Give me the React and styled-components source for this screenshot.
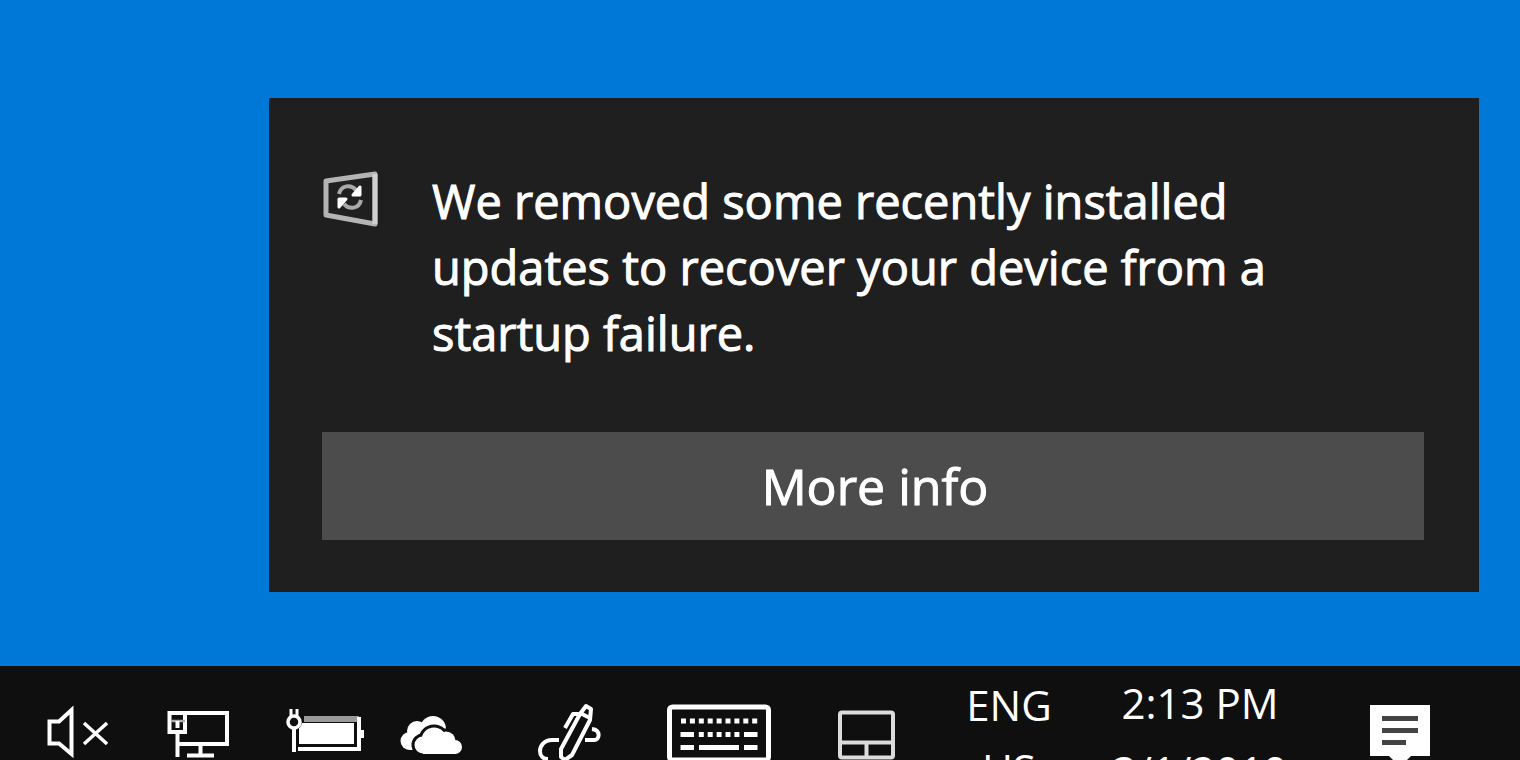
import React from "react";
import styled, { createGlobalStyle } from "styled-components";

const GlobalStyle = createGlobalStyle`
  * { box-sizing: border-box; }
  body { margin: 0; background: #0078d8; }
`;

const Screen = styled.div`
  display: flex;
  flex-direction: column;
  height: 100vh;
  overflow: hidden;
  background: #0078d8;
  color: #fff;
  font-family: "Open Sans", "Noto Sans", sans-serif;
`;

const Desktop = styled.main`
  flex: none;
  padding: 98px 41px 74px 269px;
`;

const Toast = styled.section`
  display: flex;
  flex-direction: column;
  gap: 66px;
  padding: 70px 55px 52px 53px;
  background: #1f1f1f;
  -webkit-text-stroke: 1px #fff;
`;

const Message = styled.div`
  display: flex;
  gap: 52px;
`;

const ToastIcon = styled.svg`
  flex: none;
  width: 58px;
  height: 58px;
  margin-top: 2px;
`;

const MessageText = styled.p`
  margin: 0;
  max-width: 860px;
  font-size: 47px;
  line-height: 66px;
`;

const ToastButton = styled.button`
  height: 108px;
  border: 0;
  padding: 0 0 0 4px;
  background: #4c4c4c;
  color: inherit;
  font-family: inherit;
  font-size: 50px;
`;

const Taskbar = styled.footer`
  flex: none;
  display: grid;
  grid-template-columns: 122fr 120fr 133fr 82fr 191fr 110fr 185fr 100fr 282fr 118fr;
  padding: 0 61px 0 16px;
  background: #0f0f0f;
`;

const TrayButton = styled.button`
  display: flex;
  justify-content: center;
  align-items: flex-start;
  border: 0;
  padding: 37px 0 0;
  background: none;
  color: inherit;
  font-family: inherit;
`;

const TrayText = styled(TrayButton)`
  padding-top: ${(p) => p.$top}px;
  font-size: 42px;
  line-height: ${(p) => p.$line}px;
  white-space: nowrap;
`;

const Glyph = styled.svg`
  flex: none;
  height: 64px;
  fill: none;
  stroke: #fff;
  stroke-width: 4;
`;

function TrayIcon({ label, width, children }) {
  return (
    <TrayButton aria-label={label}>
      <Glyph width={width} viewBox={`0 0 ${width} 64`}>{children}</Glyph>
    </TrayButton>
  );
}

const frontCloud = (
  <>
    <circle cx="23" cy="42" r="8.5" />
    <circle cx="34" cy="37" r="12.5" />
    <circle cx="46" cy="38" r="9.5" />
    <circle cx="55" cy="44" r="7" />
    <path d="M23 34H50L56 40V51H23Z" />
  </>
);

export default function App() {
  return (
    <Screen>
      <GlobalStyle />
      <Desktop>
        <Toast>
          <Message>
            <ToastIcon viewBox="0 0 58 58" fill="none" stroke="#b4b4b4" strokeWidth="5" strokeLinejoin="round">
              <path d="M4 11L53 4V54L4 45Z" />
              <path d="M53 4V54" stroke="#d0d0d0" />
              <path d="M17 24C19 15 29 14 34 20M39 30C37 39 27 40 22 34" stroke="#a8a8a8" strokeWidth="4" />
              <path d="M38 17V25H31ZM17 37V29H24Z" fill="#fff" stroke="#fff" strokeWidth="3" />
            </ToastIcon>
            <MessageText>
              We removed some recently installed updates to recover your device from a startup failure.
            </MessageText>
          </Message>
          <ToastButton>More info</ToastButton>
        </Toast>
      </Desktop>
      <Taskbar>
        <TrayIcon label="Volume muted" width={62}>
          <path d="M3.5 18.5H13L25.5 7V51L13 40.5H3.5Z" />
          <path d="M38 20L61 41M61 20L38 41" strokeWidth="3.5" />
        </TrayIcon>
        <TrayIcon label="Network" width={62}>
          <path d="M18 10H60V41H11" />
          <path d="M2.5 10H18V29H2.5ZM10.5 29V54" />
          <path d="M33.5 41V52M20 52.5H47" />
          <path d="M4 18H18" stroke="#aaa" strokeWidth="2.5" />
          <path d="M10.5 18V25" />
        </TrayIcon>
        <TrayIcon label="Battery charging" width={78}>
          <path d="M18 16H73" stroke="#999" strokeWidth="6" />
          <path d="M73 14V46H12" />
          <path d="M13 20H68V41H13Z" fill="#fff" stroke="none" />
          <path d="M75 27h3v8h-3Z" fill="#fff" stroke="none" />
          <circle cx="8" cy="19" r="8" fill="#0f0f0f" stroke="none" />
          <circle cx="8" cy="19" r="6" strokeWidth="3.5" />
          <path d="M5 6V14M11 6V14" strokeWidth="3" />
          <path d="M8 26V49" />
        </TrayIcon>
        <TrayIcon label="OneDrive" width={64}>
          <g fill="#fff" stroke="none">
            <circle cx="9.500" cy="38" r="9" />
            <circle cx="17" cy="28" r="10" />
            <circle cx="33" cy="26" r="13" />
            <path d="M10 32H24V47H10Z" />
          </g>
          <g fill="#0f0f0f" stroke="#0f0f0f" strokeWidth="6">{frontCloud}</g>
          <g fill="#fff" stroke="none">{frontCloud}</g>
        </TrayIcon>
        <TrayIcon label="Windows Ink Workspace" width={64}>
          <g strokeWidth="4" strokeLinejoin="round">
            <path d="M24 46L43 11L49 3L54 6L53 17L35 52L28 57L24 54Z" />
            <path d="M43 10L53 15" />
            <path d="M28 25L36 11H43" />
            <path d="M22 37H15C7 37 3 43 3 48C3 53 6 56 11 56" />
            <path d="M55 26C64 27 63 37 57 37H48" />
          </g>
        </TrayIcon>
        <TrayIcon label="Touch keyboard" width={104}>
          <rect x="2.5" y="4" width="99" height="53" rx="3" strokeWidth="5" />
          <g strokeWidth="5">
            <path d="M14 18H92" strokeDasharray="5 3.9" />
            <path d="M13.5 31.5H27M77 31.5H90.5M13.5 44.5H27M32 44.5H72M77 44.5H90.5" />
            <path d="M31.8 31.5H73" strokeDasharray="5 3.9" />
          </g>
        </TrayIcon>
        <TrayIcon label="Touchpad" width={59}>
          <rect x="3" y="9.5" width="53" height="45" rx="2" stroke="#dcdcdc" />
          <path d="M3 39.5H56M29.5 39.5V54" stroke="#dcdcdc" />
        </TrayIcon>
        <TrayText $top={7} $line={64}>ENG<br />US</TrayText>
        <TrayText $top={3} $line={68}>2:13 PM<br />3/1/2019</TrayText>
        <TrayIcon label="Action center" width={62}>
          <path d="M1 2H61V53H42L31 64L20 53H1Z" fill="#fff" stroke="none" />
          <path d="M13 15.5H49M13 27.5H49M13 39.5H37" stroke="#444" strokeWidth="5" />
        </TrayIcon>
      </Taskbar>
    </Screen>
  );
}
